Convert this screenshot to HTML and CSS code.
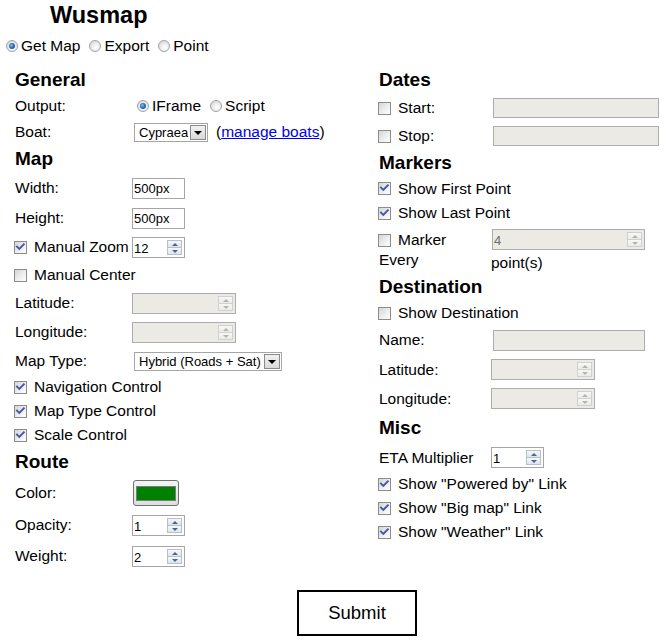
FILE: index.html
```html
<!DOCTYPE html>
<html>
<head>
<meta charset="utf-8">
<title>Wusmap</title>
<link rel="stylesheet" href="styles.css">
</head>
<body>
<div class="page">
  <h1 class="title">Wusmap</h1>
  <div class="modes">
    <span class="opt"><span class="radio on"></span>Get Map</span>
    <span class="opt"><span class="radio"></span>Export</span>
    <span class="opt"><span class="radio"></span>Point</span>
  </div>

  <div class="columns">
    <div class="col left">
      <h3 class="sec h27">General</h3>
      <div class="row h26"><span class="lbl">Output:</span>
        <span class="opts"><span class="opt"><span class="radio on"></span>IFrame</span><span class="opt"><span class="radio"></span>Script</span></span>
      </div>
      <div class="row h26"><span class="lbl">Boat:</span>
        <span class="sel w74"><span class="sel-text">Cypraea</span><span class="sel-btn"></span></span>
        <span class="manage">(<a href="#">manage boats</a>)</span>
      </div>

      <h3 class="sec h28">Map</h3>
      <div class="row h30"><span class="lbl">Width:</span><span class="txt w53">500px</span></div>
      <div class="row h30"><span class="lbl">Height:</span><span class="txt w53">500px</span></div>
      <div class="row h28"><span class="lbl"><span class="cb on"><svg viewBox="0 0 11 11"><path d="M2 4.6 L4.3 6.9 L8.8 2.3"/></svg></span>Manual Zoom</span>
        <span class="spin w53"><span class="spin-text">12</span><span class="arrows"><span class="up"></span><span class="dn"></span></span></span>
      </div>
      <div class="row h28"><span class="lbl"><span class="cb"></span>Manual Center</span></div>
      <div class="row h28"><span class="lbl">Latitude:</span>
        <span class="spin w104 dis"><span class="spin-text"></span><span class="arrows"><span class="up"></span><span class="dn"></span></span></span>
      </div>
      <div class="row h30"><span class="lbl">Longitude:</span>
        <span class="spin w104 dis"><span class="spin-text"></span><span class="arrows"><span class="up"></span><span class="dn"></span></span></span>
      </div>
      <div class="row h28"><span class="lbl">Map Type:</span>
        <span class="sel w148"><span class="sel-text">Hybrid (Roads + Sat)</span><span class="sel-btn"></span></span>
      </div>
      <div class="row h24"><span class="lbl wide"><span class="cb on"><svg viewBox="0 0 11 11"><path d="M2 4.6 L4.3 6.9 L8.8 2.3"/></svg></span>Navigation Control</span></div>
      <div class="row h24"><span class="lbl wide"><span class="cb on"><svg viewBox="0 0 11 11"><path d="M2 4.6 L4.3 6.9 L8.8 2.3"/></svg></span>Map Type Control</span></div>
      <div class="row h24"><span class="lbl wide"><span class="cb on"><svg viewBox="0 0 11 11"><path d="M2 4.6 L4.3 6.9 L8.8 2.3"/></svg></span>Scale Control</span></div>

      <h3 class="sec h30">Route</h3>
      <div class="row h32"><span class="lbl">Color:</span><span class="color-btn"><span class="swatch"></span></span></div>
      <div class="row h32"><span class="lbl">Opacity:</span>
        <span class="spin w53"><span class="spin-text">1</span><span class="arrows"><span class="up"></span><span class="dn"></span></span></span>
      </div>
      <div class="row h30"><span class="lbl">Weight:</span>
        <span class="spin w53"><span class="spin-text">2</span><span class="arrows"><span class="up"></span><span class="dn"></span></span></span>
      </div>
    </div>

    <div class="col right">
      <h3 class="sec h28">Dates</h3>
      <div class="row h28"><span class="lbl"><span class="cb"></span>Start:</span><span class="txt dis w166 ml2 t20"></span></div>
      <div class="row h28"><span class="lbl"><span class="cb"></span>Stop:</span><span class="txt dis w166 ml2 t20"></span></div>

      <h3 class="sec h26">Markers</h3>
      <div class="row h25"><span class="lbl wide"><span class="cb on"><svg viewBox="0 0 11 11"><path d="M2 4.6 L4.3 6.9 L8.8 2.3"/></svg></span>Show First Point</span></div>
      <div class="row h24"><span class="lbl wide"><span class="cb on"><svg viewBox="0 0 11 11"><path d="M2 4.6 L4.3 6.9 L8.8 2.3"/></svg></span>Show Last Point</span></div>
      <div class="row h48 top">
        <span class="lbl stack"><span class="line"><span class="cb"></span>Marker</span><span class="line">Every</span></span>
        <span class="stackval">
          <span class="spin w153 dis ml1"><span class="spin-text grey">4</span><span class="arrows"><span class="up"></span><span class="dn"></span></span></span>
          <span class="after">point(s)</span>
        </span>
      </div>

      <h3 class="sec h28">Destination</h3>
      <div class="row h24"><span class="lbl wide"><span class="cb"></span>Show Destination</span></div>
      <div class="row h30"><span class="lbl">Name:</span><span class="txt dis w152 ml2"></span></div>
      <div class="row h29"><span class="lbl">Latitude:</span>
        <span class="spin w104 dis"><span class="spin-text"></span><span class="arrows"><span class="up"></span><span class="dn"></span></span></span>
      </div>
      <div class="row h29"><span class="lbl">Longitude:</span>
        <span class="spin w104 dis"><span class="spin-text"></span><span class="arrows"><span class="up"></span><span class="dn"></span></span></span>
      </div>

      <h3 class="sec h30">Misc</h3>
      <div class="row h29"><span class="lbl">ETA Multiplier</span>
        <span class="spin w53"><span class="spin-text">1</span><span class="arrows"><span class="up"></span><span class="dn"></span></span></span>
      </div>
      <div class="row h24"><span class="lbl wide"><span class="cb on"><svg viewBox="0 0 11 11"><path d="M2 4.6 L4.3 6.9 L8.8 2.3"/></svg></span>Show "Powered by" Link</span></div>
      <div class="row h24"><span class="lbl wide"><span class="cb on"><svg viewBox="0 0 11 11"><path d="M2 4.6 L4.3 6.9 L8.8 2.3"/></svg></span>Show "Big map" Link</span></div>
      <div class="row h24"><span class="lbl wide"><span class="cb on"><svg viewBox="0 0 11 11"><path d="M2 4.6 L4.3 6.9 L8.8 2.3"/></svg></span>Show "Weather" Link</span></div>
    </div>
  </div>

  <div class="actions"><button class="submit" type="button">Submit</button></div>
</div>
</body>
</html>
```

FILE: styles.css
```css
* { box-sizing: border-box; }
html, body { margin: 0; padding: 0; background: #fff; }
body {
  font-family: "Liberation Sans", Arial, sans-serif;
  font-size: 15.5px;
  color: #000;
}
.page { width: 668px; height: 643px; overflow: hidden; }

.title {
  margin: 0;
  height: 35px;
  padding: 2px 0 0 50px;
  font-size: 23.5px;
  line-height: 26px;
  font-weight: bold;
}

.modes {
  display: flex;
  align-items: center;
  height: 22px;
  padding-left: 6px;
  gap: 9px;
}
.opt { display: inline-flex; align-items: center; white-space: nowrap; }
.opts { display: inline-flex; align-items: center; gap: 9px; margin-left: 5px; }

.radio {
  position: relative;
  flex: none;
  width: 12px;
  height: 12px;
  margin-right: 3px;
  border-radius: 50%;
  border: 1px solid #a2a2a2;
  background: radial-gradient(circle at 60% 65%, #ffffff 0%, #eeeeee 40%, #d0d0d0 100%);
}
.radio.on::after {
  content: "";
  position: absolute;
  left: 2px;
  top: 2px;
  width: 6px;
  height: 6px;
  border-radius: 50%;
  background: radial-gradient(circle at 40% 40%, #8fbdec 0%, #2a72c6 45%, #0f4589 100%);
}

.columns {
  display: grid;
  grid-template-columns: 364px 289px;
  align-items: start;
  padding-left: 15px;
  margin-top: 9px;
}
.col { display: flex; flex-direction: column; }

.sec {
  margin: 0;
  display: flex;
  align-items: center;
  font-size: 19px;
  font-weight: bold;
}
.row { display: flex; align-items: center; }
.row.top { align-items: flex-start; }

.h24 { height: 24px; }
.h25 { height: 25px; }
.h26 { height: 26px; }
.h27 { height: 27px; }
.h28 { height: 28px; }
.h29 { height: 29px; }
.h30 { height: 30px; }
.h32 { height: 32px; }
.h48 { height: 48px; }

.lbl {
  display: inline-flex;
  align-items: center;
  flex: none;
  width: 117px;
  white-space: nowrap;
}
.right .lbl { width: 112px; }
.lbl.wide { width: auto; }

.lbl.stack {
  flex-direction: column;
  align-items: flex-start;
  padding-top: 5px;
  line-height: 20px;
}
.lbl.stack .line { display: flex; align-items: center; height: 20px; }

.stackval {
  display: flex;
  flex-direction: column;
  align-items: flex-start;
  padding-top: 4px;
}
.after { margin-top: 4px; line-height: 18px; }

.cb {
  position: relative;
  flex: none;
  width: 13px;
  height: 13px;
  margin-left: -1px;
  margin-right: 7px;
  border: 1px solid #8c8c8c;
  background: linear-gradient(135deg, #d4d4d4 0%, #ececec 50%, #ffffff 100%);
}
.cb svg {
  position: absolute;
  left: 0;
  top: 0;
  width: 11px;
  height: 11px;
}
.cb svg path {
  fill: none;
  stroke: #4658a8;
  stroke-width: 2;
  stroke-linecap: square;
}

.txt {
  display: inline-flex;
  align-items: center;
  height: 21px;
  padding: 0 1px;
  border: 1px solid #a5a5a5;
  background: #fff;
  font-size: 13px;
  color: #000;
}
.txt.dis { background: #ebeae4; border-color: #adadad; }
.t20 { height: 20px; }
.w53 { width: 53px; }
.w74 { width: 74px; }
.w104 { width: 104px; }
.w148 { width: 148px; }
.w152 { width: 152px; }
.w153 { width: 153px; }
.w166 { width: 166px; }
.ml1 { margin-left: 1px; }
.ml2 { margin-left: 2px; }

.spin {
  display: inline-flex;
  align-items: stretch;
  height: 21px;
  padding: 2px 2px 2px 1px;
  border: 1px solid #a5a5a5;
  background: #fff;
}
.spin.dis { background: #ebeae4; border-color: #adadad; }
.spin-text {
  flex: 1;
  font-size: 13px;
  line-height: 17px;
  color: #000;
}
.spin-text.grey { color: #6d6d6d; }
.arrows {
  flex: none;
  width: 15px;
  display: flex;
  flex-direction: column;
}
.arrows span {
  position: relative;
  flex: 1;
  border: 1px solid #b8c0cc;
  background: linear-gradient(#f6f7f9, #dfe4ec);
}
.arrows .dn { border-top: none; }
.arrows span::after {
  content: "";
  position: absolute;
  left: 4px;
  width: 0;
  height: 0;
  border-left: 3px solid transparent;
  border-right: 3px solid transparent;
}
.arrows .up::after { top: 2px; border-bottom: 3px solid #4d6392; }
.arrows .dn::after { top: 2px; border-top: 3px solid #4d6392; }
.spin.dis .arrows span { border-color: #d0d0d0; background: linear-gradient(#f7f7f5, #ebebe7); }
.spin.dis .arrows .dn { border-top: none; }
.spin.dis .arrows .up::after { border-bottom-color: #b3b3b3; }
.spin.dis .arrows .dn::after { border-top-color: #b3b3b3; }

.sel {
  display: inline-flex;
  align-items: center;
  height: 19px;
  margin-left: 2px;
  padding: 1px;
  border: 1px solid #a5a5a5;
  background: #fff;
  font-size: 13px;
}
.sel-text { flex: 1; padding-left: 3px; white-space: nowrap; }
.sel-btn {
  position: relative;
  flex: none;
  width: 16px;
  height: 15px;
  border: 1px solid #8a8a8a;
  background: linear-gradient(#f0f0f0, #dadada);
}
.sel-btn::after {
  content: "";
  position: absolute;
  left: 3px;
  top: 5px;
  border-left: 4px solid transparent;
  border-right: 4px solid transparent;
  border-top: 4px solid #000;
}

.manage { margin-left: 8px; }
.manage a { color: #0000ee; text-decoration: underline; }

.color-btn {
  display: inline-flex;
  align-items: center;
  justify-content: center;
  width: 46px;
  height: 26px;
  margin-left: 1px;
  border: 1px solid #707070;
  border-radius: 3px;
  background: linear-gradient(#f4f4f4, #dedede);
}
.swatch {
  width: 40px;
  height: 15px;
  border: 1px solid #7a7a7a;
  background: #008000;
}

.actions { margin-top: 19px; padding-left: 297px; }
.submit {
  width: 120px;
  height: 46px;
  padding: 0;
  border: 2px solid #000;
  background: #fff;
  font-family: "Liberation Sans", Arial, sans-serif;
  font-size: 18.5px;
  color: #000;
}
```
